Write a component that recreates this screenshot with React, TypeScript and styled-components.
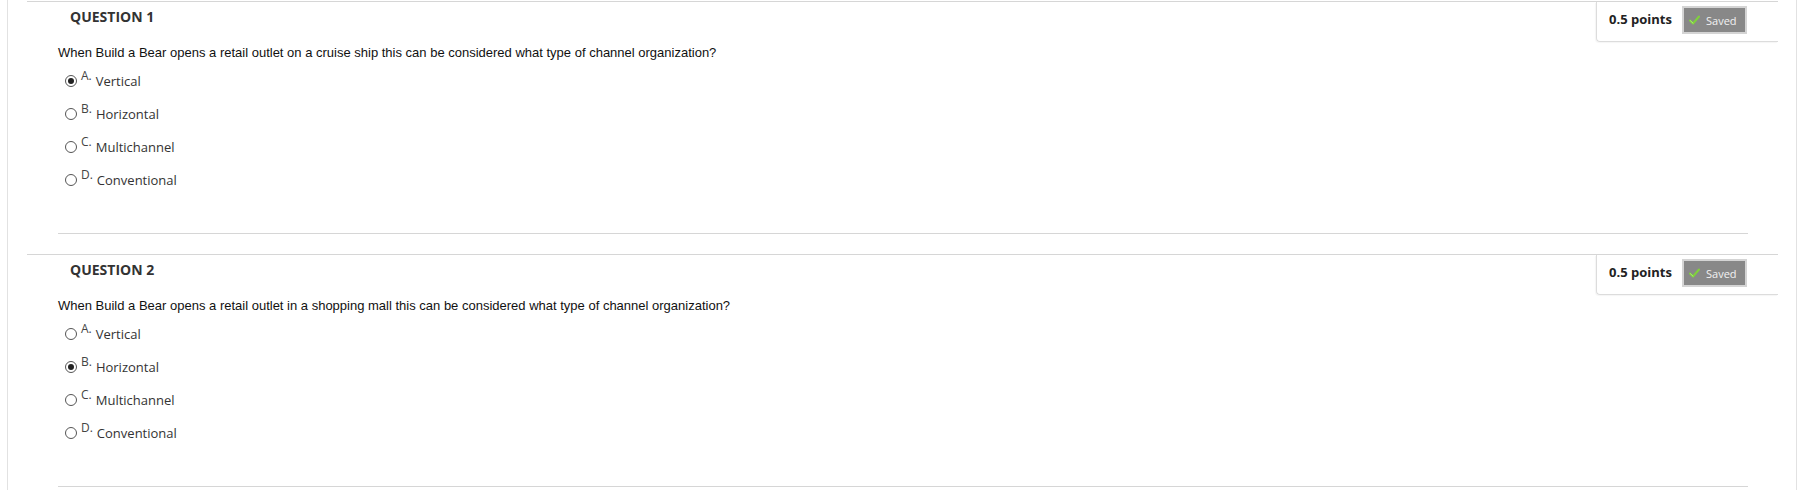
import React from 'react'
import styled, { createGlobalStyle } from 'styled-components'

const GlobalStyle = createGlobalStyle`
  html, body {
    margin: 0;
    padding: 0;
    background: #fff;
  }
  body {
    font-family: "Open Sans", "Liberation Sans", Arial, sans-serif;
  }
`;

type Question = {
  number: number
  text: string
  selected: number
}

const answers = ['Vertical', 'Horizontal', 'Multichannel', 'Conventional'];
const letters = ['A.', 'B.', 'C.', 'D.'];

const questions: Question[] = [
  {
    number: 1,
    text: 'When Build a Bear opens a retail outlet on a cruise ship this can be considered what type of channel organization?',
    selected: 0,
  },
  {
    number: 2,
    text: 'When Build a Bear opens a retail outlet in a shopping mall this can be considered what type of channel organization?',
    selected: 1,
  },
];

function CheckIcon() {
  return (
    <svg width="11" height="10" viewBox="0 0 11 10">
      <path d="M1 5.5 L4 8.5 L10 1.5" fill="none" stroke="#7fd13b" strokeWidth="2" strokeLinecap="round" strokeLinejoin="round" />
      <path d="M1.5 5.8 L4 8.2" fill="none" stroke="#b8ef8a" strokeWidth="0.8" strokeLinecap="round" />
    </svg>
  )
}

function App() {
  return (
    <>
      <GlobalStyle />
      <Frame>
        <List>
          {questions.map((q) => (
            <Item key={q.number}>
              <Header>
                <Heading>QUESTION {q.number}</Heading>
                <PointsBox>
                  <Points>0.5 points</Points>
                  <SavedButton>
                    <CheckIcon />
                    <span>Saved</span>
                  </SavedButton>
                </PointsBox>
              </Header>
              <Body>
                <QuestionText>{q.text}</QuestionText>
                <Answers>
                  {answers.map((a, i) => (
                    <Answer key={a}>
                      <Radio checked={i === q.selected} />
                      <Letter>{letters[i]}</Letter>
                      <Label>{a}</Label>
                    </Answer>
                  ))}
                </Answers>
              </Body>
            </Item>
          ))}
        </List>
      </Frame>
    </>
  )
}

export default App


const Frame = styled.div`
  margin-left: 7px;
  width: 1790px;
  min-height: 490px;
  border-left: 1px solid #e2e2e2;
  border-right: 1px solid #e2e2e2;
  padding-top: 1px;
  box-sizing: border-box;
`;

const List = styled.ul`
  list-style: none;
  margin: 0 18px 0 19px;
  padding: 0;
  display: flex;
  flex-direction: column;
  gap: 20px;
`;

const Item = styled.li`
  border-top: 1px solid #d6d6d6;
`;

const Header = styled.div`
  display: flex;
  justify-content: space-between;
  align-items: flex-start;
  height: 40px;
`;

const Heading = styled.h3`
  margin: 0;
  padding: 5px 0 0 43px;
  font-size: 14px;
  line-height: 20px;
  font-weight: 700;
  color: #333;
`;

const PointsBox = styled.div`
  box-sizing: border-box;
  width: 182px;
  height: 40px;
  display: flex;
  align-items: flex-start;
  padding: 4px 0 0 12px;
  border-left: 1px solid #dcdcdc;
  border-bottom: 1px solid #dcdcdc;
  border-bottom-left-radius: 4px;
  box-shadow: -1px 1px 1px rgba(0, 0, 0, 0.04);
`;

const Points = styled.span`
  font-size: 13px;
  font-weight: 700;
  line-height: 27px;
  color: #222;
  width: 73px;
`;

const SavedButton = styled.div`
  box-sizing: border-box;
  width: 65px;
  height: 28px;
  display: flex;
  align-items: center;
  gap: 6px;
  padding-left: 5px;
  background: #888;
  border: 2px solid #d4d4d4;
  color: #f2f2f2;
  font-size: 11px;
`;

const Body = styled.div`
  margin: 0 30px 0 31px;
  padding: 3px 0 37px;
  border-bottom: 1px solid #d6d6d6;
`;

const QuestionText = styled.p`
  margin: 0;
  font-family: "Liberation Sans", Arial, sans-serif;
  font-size: 13px;
  line-height: 16px;
  color: #111;
`;

const Answers = styled.ul`
  list-style: none;
  margin: 3px 0 0;
  padding: 0 0 0 7px;
`;

const Answer = styled.li`
  height: 33px;
  display: flex;
  align-items: center;
`;

const Radio = styled.span<{ checked: boolean }>`
  box-sizing: border-box;
  width: 12px;
  height: 12px;
  border-radius: 50%;
  border: 1px solid #555;
  background: #fff;
  display: flex;
  align-items: center;
  justify-content: center;
  margin-right: 4px;
  &::after {
    content: '';
    display: ${(p) => (p.checked ? 'block' : 'none')};
    width: 6px;
    height: 6px;
    border-radius: 50%;
    background: #222;
  }
`;

const Letter = styled.span`
  font-size: 12px;
  color: #444;
  position: relative;
  top: -5px;
  margin-right: 4px;
`;

const Label = styled.span`
  font-size: 13px;
  color: #333;
  position: relative;
  top: 0;
`;
